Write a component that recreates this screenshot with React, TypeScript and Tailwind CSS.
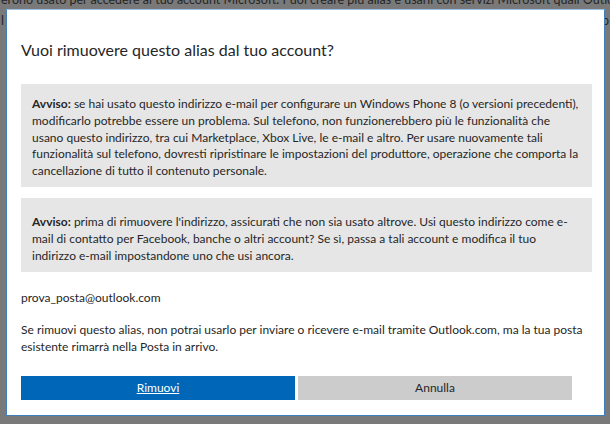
export default function App() {
  const font = { fontFamily: 'Lato, "Open Sans", sans-serif' };
  return (
    <div className="relative w-[610px] h-[424px] overflow-hidden bg-[#797979]" style={font}>
      {/* page behind the overlay */}
      <div className="pl-[1px] -mt-[9px] text-[12.5px] leading-[17px] text-[#262626] whitespace-nowrap">
        <p>erono usato per accedere al tuo account Microsoft. Puoi creare più alias e usarli con servizi Microsoft quali Outlook.com</p>
        <p className="mt-[4px] flex justify-between pr-[1px]"><span>l</span><span>p</span></p>
      </div>

      {/* dialog */}
      <div className="absolute left-[6px] top-[9px] w-[599px] h-[407px] bg-white border border-[#3f7fba] border-t-[#9cc3e6] pl-[14px] pr-[12px]">
        <h1 className="pt-[28px] text-[16px] leading-[24px] text-[#262626] font-normal">
          Vuoi rimuovere questo alias dal tuo account?
        </h1>

        <div className="mt-[22px] bg-[#e6e6e6] pl-[11px] pt-[12px] pb-[7px] text-[12px] leading-[16.8px] text-[#262626] whitespace-nowrap">
          <b className="font-bold">Avviso:</b> se hai usato questo indirizzo e-mail per configurare un Windows Phone 8 (o versioni precedenti),<br />
          modificarlo potrebbe essere un problema. Sul telefono, non funzionerebbero più le funzionalità che<br />
          usano questo indirizzo, tra cui Marketplace, Xbox Live, le e-mail e altro. Per usare nuovamente tali<br />
          funzionalità sul telefono, dovresti ripristinare le impostazioni del produttore, operazione che comporta la<br />
          cancellazione di tutto il contenuto personale.
        </div>

        <div className="mt-[11px] bg-[#e6e6e6] pl-[11px] pt-[16px] pb-[8px] text-[12px] leading-[16.8px] text-[#262626] whitespace-nowrap">
          <b className="font-bold">Avviso:</b> prima di rimuovere l'indirizzo, assicurati che non sia usato altrove. Usi questo indirizzo come e-<br />
          mail di contatto per Facebook, banche o altri account? Se sì, passa a tali account e modifica il tuo<br />
          indirizzo e-mail impostandone uno che usi ancora.
        </div>

        <p className="mt-[18px] text-[12px] leading-[16.8px] text-[#262626]">prova_posta@outlook.com</p>

        <p className="mt-[15px] text-[12px] leading-[16.8px] text-[#262626] whitespace-nowrap">
          Se rimuovi questo alias, non potrai usarlo per inviare o ricevere e-mail tramite Outlook.com, ma la tua posta<br />
          esistente rimarrà nella Posta in arrivo.
        </p>

        <div className="mt-[20px] flex gap-[3px]">
          <button className="w-[274px] h-[24px] bg-[#0067b8] text-white text-[12px] underline">Rimuovi</button>
          <button className="w-[274px] h-[24px] bg-[#cccccc] text-[#262626] text-[12px]">Annulla</button>
        </div>
      </div>
    </div>
  );
}
